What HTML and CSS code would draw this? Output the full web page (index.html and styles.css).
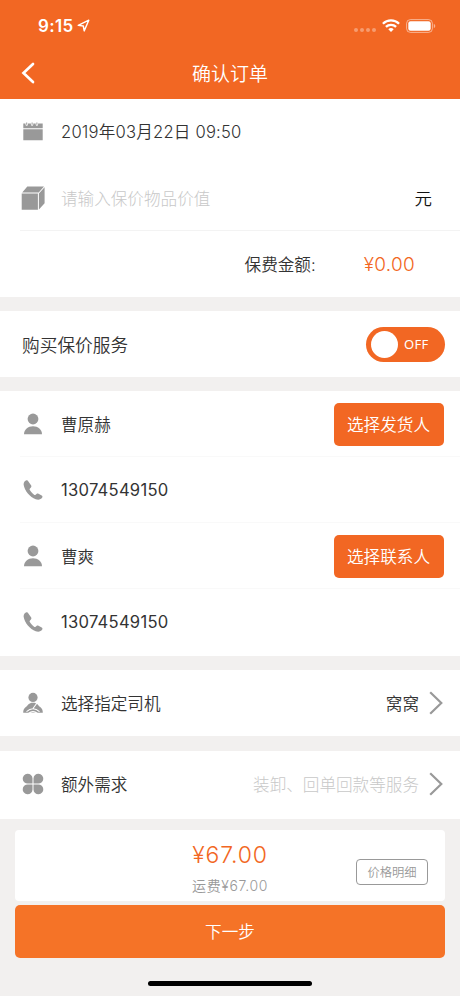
FILE: index.html
```html
<!DOCTYPE html>
<html lang="zh-CN">
<head>
<meta charset="utf-8">
<title>确认订单</title>
<link rel="stylesheet" href="styles.css">
</head>
<body>
<svg class="defs" aria-hidden="true">
  <symbol id="person" viewBox="0 0 20 22"><circle cx="10" cy="6" r="5.400"/><path d="M1 21.300c0-4.700 4-8 9-8s9 3.300 9 8z"/></symbol>
  <symbol id="phone" viewBox="0 0 20 20"><path d="M3 .4C1.300 1 .4 2.800.7 5c.8 5.500 6.300 12.200 12 14.200 2.600.9 5.300.4 6.500-1.600.5-.8.3-1.500-.5-2l-3.200-1.900c-.7-.4-1.400-.3-2 .2l-1.200 1c-.4.200-.8.100-1.200-.2-2-1.500-3.500-3.200-4.400-5-.2-.5-.1-.9.300-1.300l.9-.9c.5-.5.600-1.100.3-1.900L5.200 1.200C4.800.3 4.100 0 3 .4z"/></symbol>
  <symbol id="chevron" viewBox="0 0 14 24"><path d="M1.200 1.200 12.300 12 1.200 22.800" fill="none" stroke="#999" stroke-width="2.200"/></symbol>
</svg>
<header class="header">
  <div class="status">
    <span class="time">9:15</span>
    <svg class="location" viewBox="0 0 13 13"><path d="M1.200 6.400 11.800 1.200 7.200 11.900 6.300 7z" fill="none" stroke="#fff" stroke-width="1.400" stroke-linejoin="round"/></svg>
    <span class="signal"><i></i><i></i><i></i><i></i></span>
    <svg class="wifi" viewBox="0 0 18 13"><g fill="none" stroke="#fff" stroke-width="2.300"><path d="M.9 4.700a11.600 11.600 0 0 1 16.200 0"/><path d="M3.900 7.900a7.300 7.300 0 0 1 10.200 0"/></g><path d="M6.300 10.300a3.900 3.900 0 0 1 5.400 0L9 13z" fill="#fff"/></svg>
    <svg class="battery" viewBox="0 0 30 14"><rect x=".6" y=".6" width="25.800" height="12.800" rx="3.800" fill="none" stroke="#fff" stroke-opacity=".5"/><rect x="2.300" y="2.200" width="22.400" height="9.600" rx="2.200" fill="#fff"/><path d="M27.800 4.800c2 .8 2 3.600 0 4.400z" fill="#fff" opacity=".5"/></svg>
  </div>
  <div class="nav">
    <svg class="back" viewBox="0 0 14 22"><path d="M12 2 2.500 11 12 20" fill="none" stroke="#fff" stroke-width="2.700" stroke-linecap="round"/></svg>
    <h1>确认订单</h1>
  </div>
</header>
<main>
  <section>
    <div class="row">
      <svg class="icon" viewBox="0 0 24 24"><path d="M2.300 3.500h2.200v1a1.200 1.200 0 0 0 2.400 0v-1h3v1a1.200 1.200 0 0 0 2.400 0v-1h2.400v1a1.200 1.200 0 0 0 2.400 0v-1h4.600v4.700H2.300zM2.300 9.300h19.400v10.900H2.300z"/><path d="M5.200 2.600h1v2.200h-1zM10.600 2.600h1v2.200h-1zM15.400 2.600h1v2.200h-1z"/></svg>
      <span class="label date">2019年03月22日 09:50</span>
    </div>
    <div class="row line">
      <svg class="icon" viewBox="0 0 24 24"><path d="M.7 7.500h16.200v16.200H.7zM1.200 6.500 6.300.5H23l-5.300 6zM17.900 7.400 23.600 1.300v15.900l-5.700 6.200z"/></svg>
      <span class="label placeholder cjk">请输入保价物品价值</span>
      <span class="unit cjk">元</span>
    </div>
    <div class="row fee"><span class="cjk">保费金额:</span><span class="amount">¥0.00</span></div>
  </section>
  <section class="row service"><span class="cjk">购买保价服务</span><span class="toggle"><i></i><b>OFF</b></span></section>
  <section>
    <div class="row faint"><svg class="icon person"><use href="#person"/></svg><span class="label cjk">曹原赫</span><span class="pick">选择发货人</span></div>
    <div class="row faint"><svg class="icon phone"><use href="#phone"/></svg><span class="label number">13074549150</span></div>
    <div class="row faint"><svg class="icon person"><use href="#person"/></svg><span class="label cjk">曹爽</span><span class="pick">选择联系人</span></div>
    <div class="row"><svg class="icon phone"><use href="#phone"/></svg><span class="label number">13074549150</span></div>
  </section>
  <section class="row">
    <svg class="icon" viewBox="0 0 24 24"><circle cx="12" cy="6.400" r="4.600"/><path d="M2.200 21.800c0-2.600.6-4.200 2.600-5.700C7 14.400 7.500 11.800 12 11.800s5 2.600 7.200 4.300c2 1.500 2.600 3.100 2.600 5.700z"/><path d="M16 12 12.200 17.200M5.500 20.600q6.500-5.600 13 0M7.500 22.400q4.500-3.600 9 0" fill="none" stroke="#fff" stroke-width="1.100"/></svg>
    <span class="label cjk">选择指定司机</span><span class="value cjk">窝窝</span><svg class="chevron"><use href="#chevron"/></svg>
  </section>
  <section class="row extra">
    <svg class="icon" viewBox="0 0 24 24"><path d="M11.500 11.500H7.200a4.900 4.900 0 1 1 4.300-4.900zM12.500 11.500V6.600a4.900 4.900 0 1 1 4.300 4.900zM11.500 12.500v4.900a4.900 4.900 0 1 1-4.300-4.900zM12.500 12.500h4.300a4.900 4.900 0 1 1-4.300 4.900z"/></svg>
    <span class="label cjk">额外需求</span><span class="value placeholder cjk">装卸、回单回款等服务</span><svg class="chevron"><use href="#chevron"/></svg>
  </section>
</main>
<footer>
  <div class="summary">
    <span></span>
    <div class="price"><strong>¥67.00</strong><small>运费¥67.00</small></div>
    <span class="detail">价格明细</span>
  </div>
  <div class="next">下一步</div>
  <div class="home"></div>
</footer>
</body>
</html>
```
FILE: styles.css
```css
* { box-sizing: border-box; }
body {
  margin: 0;
  width: 460px;
  height: 996px;
  overflow: hidden;
  background: #f2f0ef;
  color: #333;
  font: 350 16.6px/24px Inter, "Noto Sans CJK SC", sans-serif;
  white-space: nowrap;
}
.defs { display: none; }
.header { height: 99px; background: #f26723; color: #fff; }
.status { display: flex; align-items: center; height: 50px; padding: 1px 24px 0 38px; }
.time { font-size: 17px; font-weight: 600; letter-spacing: .3px; }
.location { width: 13px; height: 13px; margin-left: 4px; }
.signal { display: flex; gap: 2px; margin: 9px 6px 0 auto; }
.signal i { width: 4px; height: 4px; border-radius: 50%; background: #fff; opacity: .35; }
.wifi { width: 18px; height: 13px; margin-right: 6px; }
.battery { width: 30px; height: 14px; }
.nav { display: grid; grid-template-columns: 60px 1fr 60px; align-items: center; height: 47px; }
.back { width: 14px; height: 22px; margin: 0 0 1px 21px; }
h1 { margin: 0; padding-top: 2px; text-align: center; font-size: 19px; font-weight: 350; }
main { display: grid; gap: 14px; }
section { background: #fff; }
.row { display: flex; align-items: center; height: 66px; padding: 0 17px 0 21px; }
section > .row:last-child { height: 67px; padding-bottom: 1px; }
section > .fee.row:last-child { height: 66px; padding-bottom: 0; }
.line { background: linear-gradient(#f3f3f3, #f3f3f3) 20px 100% / 440px 1px no-repeat; }
.faint { background: linear-gradient(#f9f9f9, #f9f9f9) 20px 100% / 440px 1px no-repeat; }
.icon { width: 24px; height: 24px; flex: none; fill: #999; }
.icon.person { width: 20px; height: 22px; margin: 0 2px; }
.icon.phone { width: 20px; height: 20px; margin: 0 2px; }
.label { margin-left: 16px; }
.cjk { padding-top: 2px; }
.date { letter-spacing: .2px; }
.number { font-weight: 400; letter-spacing: .25px; }
.placeholder { color: #c8c8c8; font-weight: 300; }
.unit { margin: 0 11px 0 auto; color: #111; font-size: 17.500px; }
.fee { justify-content: flex-end; padding-right: 45px; }
.fee .cjk { padding-top: 1px; }
.amount { padding-top: 1px; margin-left: 48px; color: #f26723; font-size: 19px; letter-spacing: .3px; }
.service { justify-content: space-between; padding: 0 15px 0 22px; font-size: 17.700px; }
.service .cjk { padding-top: 3px; }
.toggle { display: flex; align-items: center; width: 79px; height: 35px; padding-left: 5px; border-radius: 18px; background: #f26723; }
.toggle i { width: 27px; height: 27px; border-radius: 50%; background: #fff; }
.toggle b { margin-left: 6px; color: #fff; font: 400 13px/20px "Noto Sans", sans-serif; letter-spacing: .3px; }
.pick { width: 110px; height: 43px; margin: 0 -.5px 0 auto; border-radius: 5px; background: #f26723; color: #fff; text-align: center; line-height: 45px; }
.value { margin-left: auto; }
.chevron { width: 14px; height: 24px; margin-left: 10px; flex: none; }
.extra.row { height: 68px; margin-top: 1px; padding-bottom: 2px; }
footer { padding: 11px 15px 0; }
.summary { display: grid; grid-template-columns: 1fr auto 1fr; align-items: center; height: 71px; border-radius: 4px; background: #fff; }
.price { display: flex; flex-direction: column; align-items: center; padding-top: 3px; }
strong { color: #f26723; font-size: 23px; font-weight: 350; line-height: 34px; letter-spacing: .8px; }
small { padding-top: 2px; margin-bottom: -2px; color: #999; font-size: 14px; font-weight: 350; letter-spacing: .6px; }
.detail { justify-self: end; width: 72px; height: 26px; margin: 12px 17px 0 0; border: 1px solid #999; border-radius: 4px; color: #999; font-size: 12.300px; line-height: 25px; text-align: center; }
.next { height: 53px; margin-top: 4px; border-radius: 5px; background: #f57327; color: #fff; text-align: center; line-height: 55px; }
.home { width: 164px; height: 5px; margin: 23px auto 0; border-radius: 3px; background: #000; }
```
